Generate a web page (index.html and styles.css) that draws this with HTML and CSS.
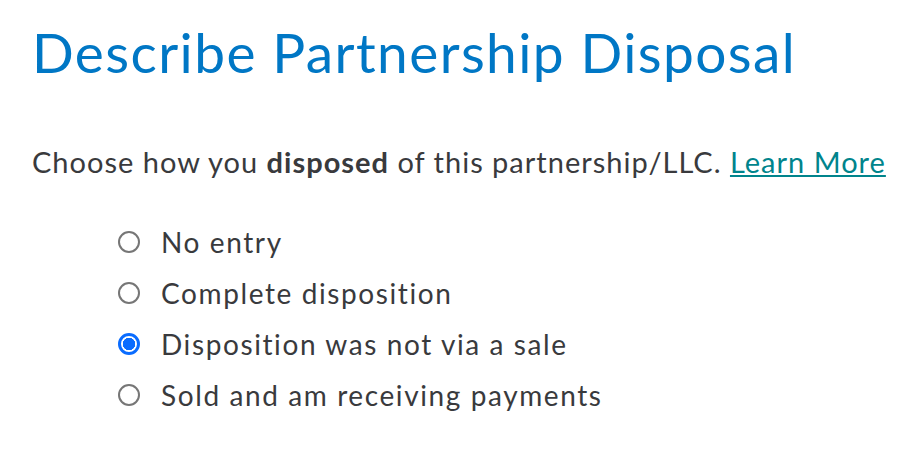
FILE: index.html
```html
<!DOCTYPE html>
<html lang="en">
<head>
  <meta charset="UTF-8" />
  <title>Describe Partnership Disposal</title>
  <link rel="stylesheet" href="styles.css">
</head>
<body>
  <div class="page">
    <h1>Describe Partnership Disposal</h1>

    <p class="intro">Choose how you <b>disposed</b> of this partnership/LLC. <a href="#">Learn More</a></p>

    <div class="choices">
      <label class="choice"><input type="radio" name="disposal"> No entry</label>
      <label class="choice"><input type="radio" name="disposal"> Complete disposition</label>
      <label class="choice"><input type="radio" name="disposal" checked> Disposition was not via a sale</label>
      <label class="choice"><input type="radio" name="disposal"> Sold and am receiving payments</label>
    </div>
  </div>
</body>
</html>
```

FILE: styles.css
```css
body {
  margin: 0;
  background: #fff;
  font-family: Lato, "Open Sans", sans-serif;
  color: #393a3d;
}

.page {
  padding: 16px 0 0 32px;
}

h1 {
  margin: 0;
  font-size: 55px;
  font-weight: 400;
  line-height: 72px;
  letter-spacing: 1.4px;
  color: #0077c5;
}

.intro {
  margin: 54px 0 0;
  font-size: 29px;
  line-height: 40px;
  letter-spacing: 1px;
}

.intro b {
  font-weight: 700;
}

.intro a {
  color: #00848c;
}

.choices {
  display: flex;
  flex-direction: column;
  padding: 34px 0 0 86px;
}

.choice {
  display: flex;
  align-items: center;
  gap: 21px;
  height: 51px;
  font-size: 28px;
  letter-spacing: 1.6px;
}

.choice input {
  appearance: none;
  margin: 0;
  width: 22px;
  height: 22px;
  border: 2px solid #767676;
  border-radius: 50%;
  box-sizing: border-box;
}

.choice input:checked {
  border: 3px solid #0a6cff;
  background: radial-gradient(circle, #0a6cff 0 6px, #fff 6.5px);
}
```
